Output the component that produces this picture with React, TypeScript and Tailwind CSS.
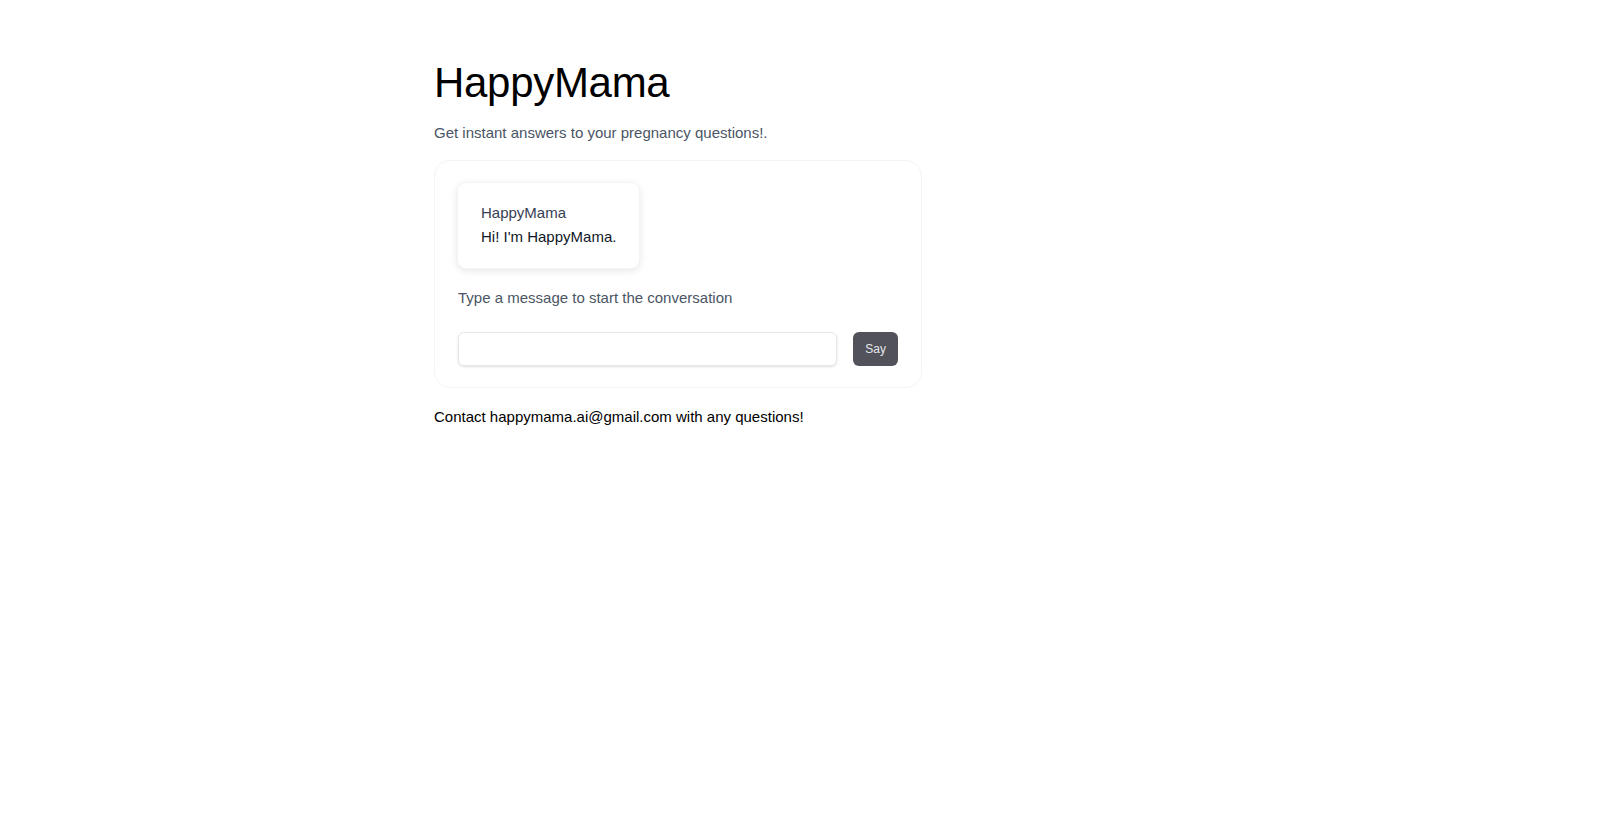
export default function App() {
  return (
    <div
      className="min-h-screen bg-white"
      style={{ fontFamily: "'Liberation Sans', Arial, sans-serif" }}
    >
      <div className="ml-[434px] w-[488px] pt-[59px]">
        <h1 className="text-[42px] leading-[48px] tracking-[-0.3px] text-black">HappyMama</h1>
        <p className="mt-[14px] text-[15px] leading-6 text-gray-600">
          Get instant answers to your pregnancy questions!.
        </p>

        {/* Chat card */}
        <div className="mt-[15px] rounded-2xl border border-gray-100 px-[23px] pt-[22px] pb-[21px]">
          <div className="inline-block rounded-lg bg-white px-[23px] pt-[18px] pb-[19px] shadow-[0_2px_8px_rgba(0,0,0,0.12)] ring-1 ring-gray-100">
            <div className="text-[15px] leading-6 text-gray-700">HappyMama</div>
            <div className="text-[15px] leading-6 text-gray-900">Hi! I'm HappyMama.</div>
          </div>

          <p className="mt-[18px] text-[15px] leading-6 text-gray-600">
            Type a message to start the conversation
          </p>

          <div className="mt-[22px] flex items-center gap-4">
            <input
              type="text"
              className="h-[34px] flex-1 rounded-md border border-gray-200 px-3 text-sm shadow-sm outline-none"
            />
            <button className="h-[34px] rounded-md bg-[#52525b] px-3 text-xs text-gray-200">
              Say
            </button>
          </div>
        </div>

        <p className="mt-[17px] text-[15px] leading-6 text-black">
          Contact happymama.ai@gmail.com with any questions!
        </p>
      </div>
    </div>
  );
}
